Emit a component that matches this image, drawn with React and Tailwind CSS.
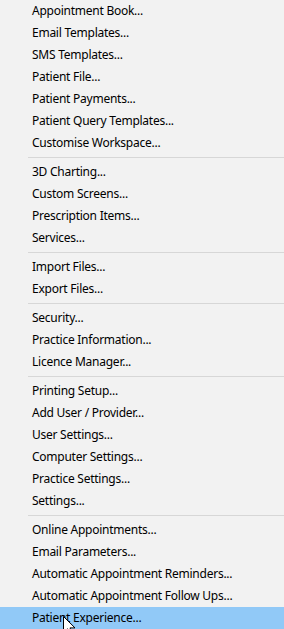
import React from "react";

const groups = [
  [
    "Appointment Book...",
    "Email Templates...",
    "SMS Templates...",
    "Patient File...",
    "Patient Payments...",
    "Patient Query Templates...",
    "Customise Workspace...",
  ],
  ["3D Charting...", "Custom Screens...", "Prescription Items...", "Services..."],
  ["Import Files...", "Export Files..."],
  ["Security...", "Practice Information...", "Licence Manager..."],
  [
    "Printing Setup...",
    "Add User / Provider...",
    "User Settings...",
    "Computer Settings...",
    "Practice Settings...",
    "Settings...",
  ],
  [
    "Online Appointments...",
    "Email Parameters...",
    "Automatic Appointment Reminders...",
    "Automatic Appointment Follow Ups...",
    "Patient Experience...",
  ],
];

const active = "Patient Experience...";

function Cursor() {
  return (
    <svg
      className="absolute left-[63px] top-[616px] pointer-events-none"
      width="13"
      height="20"
      viewBox="0 0 13 20"
    >
      <path
        d="M0.5 0.5 L0.5 16.5 L4.5 12.8 L7.2 19 L9.6 18 L7 11.9 L12 11.9 Z"
        fill="#fff"
        stroke="#000"
        strokeWidth="1"
        strokeLinejoin="miter"
      />
    </svg>
  );
}

export default function App() {
  return (
    <div
      className="relative w-[284px] h-[629px] overflow-hidden bg-[#f2f2f2] text-black text-[12px] tracking-[-0.25px]"
      style={{ fontFamily: '"Noto Sans", "Liberation Sans", sans-serif' }}
    >
      {groups.map((items, gi) => (
        <React.Fragment key={gi}>
          {gi > 0 && (
            <div className="h-[7px] flex items-center pl-[28px]">
              <div className="h-px w-full bg-[#d7d7d7]" />
            </div>
          )}
          {items.map((label) => (
            <div
              key={label}
              className={
                "h-[22px] flex items-center pl-[32px] whitespace-nowrap " +
                (label === active ? "bg-[#91c9f7]" : "")
              }
            >
              {label}
            </div>
          ))}
        </React.Fragment>
      ))}
      <Cursor />
    </div>
  );
}
